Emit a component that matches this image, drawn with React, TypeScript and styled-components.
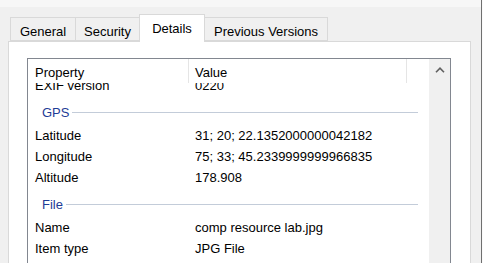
import styled, { createGlobalStyle } from 'styled-components'

const GlobalStyle = createGlobalStyle`
  body {
    margin: 0;
    background: #fafafa;
    font-family: 'Liberation Sans', Arial, sans-serif;
    font-size: 13px;
    color: #000;
  }
`

const tabs = [
  { label: 'General', width: 66 },
  { label: 'Security', width: 65 },
  { label: 'Details', width: 66, active: true },
  { label: 'Previous Versions', width: 124 },
]

type Row =
  | { kind: 'group'; label: string }
  | { kind: 'item'; name: string; value: string }

const rows: Row[] = [
  { kind: 'item', name: 'EXIF version', value: '0220' },
  { kind: 'group', label: 'GPS' },
  { kind: 'item', name: 'Latitude', value: '31; 20; 22.1352000000042182' },
  { kind: 'item', name: 'Longitude', value: '75; 33; 45.2339999999966835' },
  { kind: 'item', name: 'Altitude', value: '178.908' },
  { kind: 'group', label: 'File' },
  { kind: 'item', name: 'Name', value: 'comp resource lab.jpg' },
  { kind: 'item', name: 'Item type', value: 'JPG File' },
]

export default function App() {
  return (
    <>
      <GlobalStyle />
      <Screen>
        <Window>
          <TopStrip />
          <TabStrip>
            {tabs.map((t) => (
              <Tab key={t.label} $width={t.width} $active={!!t.active}>
                {t.label}
              </Tab>
            ))}
          </TabStrip>
          <Panel>
            <ListBox>
              <ListMain>
                <Header>
                  <HeaderCell>Property</HeaderCell>
                  <HeaderCell $value>Value</HeaderCell>
                  <HeaderRest />
                </Header>
                <Body>
                  {/* list is scrolled a few pixels, so the first row sits under the header */}
                  <Rows>
                    {rows.map((r, i) =>
                      r.kind === 'group' ? (
                        <GroupRow key={i}>
                          <GroupLabel>{r.label}</GroupLabel>
                          <GroupLine />
                        </GroupRow>
                      ) : (
                        <ItemRow key={i}>
                          <NameCell>{r.name}</NameCell>
                          <ValueCell>{r.value}</ValueCell>
                        </ItemRow>
                      )
                    )}
                  </Rows>
                </Body>
              </ListMain>
              <ScrollBar>
                <ArrowButton>
                  <svg width="10" height="6" viewBox="0 0 10 6">
                    <path d="M1 5.2 L5 1.2 L9 5.2" fill="none" stroke="#606060" strokeWidth="1.6" />
                  </svg>
                </ArrowButton>
              </ScrollBar>
            </ListBox>
          </Panel>
        </Window>
      </Screen>
    </>
  )
}

const Screen = styled.div`
  width: 483px;
  height: 263px;
  overflow: hidden;
  display: flex;
`

const Window = styled.div`
  width: 481px;
  height: 263px;
  border-right: 1px solid #6f6f6f;
  background: #f0f0f0;
  display: flex;
  flex-direction: column;
`

const TopStrip = styled.div`
  height: 7px;
  background: #f7f7f7;
  flex-shrink: 0;
`

const TabStrip = styled.div`
  height: 34px;
  padding-left: 10px;
  display: flex;
  align-items: flex-end;
  flex-shrink: 0;
`

const Tab = styled.div<{ $width: number; $active: boolean }>`
  box-sizing: border-box;
  width: ${(p) => p.$width}px;
  height: ${(p) => (p.$active ? 28 : 24)}px;
  margin-left: -1px;
  &:first-child {
    margin-left: 0;
  }
  margin-bottom: ${(p) => (p.$active ? -1 : 0)}px;
  padding-top: ${(p) => (p.$active ? 0 : 4)}px;
  border: 1px solid #d9d9d9;
  border-bottom: ${(p) => (p.$active ? 'none' : '1px solid #d9d9d9')};
  background: ${(p) => (p.$active ? '#fff' : '#f0f0f0')};
  position: relative;
  z-index: ${(p) => (p.$active ? 2 : 1)};
  display: flex;
  align-items: center;
  justify-content: center;
  white-space: nowrap;
`

const Panel = styled.div`
  box-sizing: border-box;
  margin-left: 8px;
  width: 463px;
  flex: 1;
  border: 1px solid #d9d9d9;
  background: #fff;
  padding: 16px 0 0 18px;
`

const ListBox = styled.div`
  box-sizing: border-box;
  width: 424px;
  height: 260px;
  border: 1px solid #828790;
  display: flex;
`

const ListMain = styled.div`
  flex: 1;
  display: flex;
  flex-direction: column;
  overflow: hidden;
`

const Header = styled.div`
  height: 24px;
  display: grid;
  grid-template-columns: 161px 218px 1fr;
  flex-shrink: 0;
  background: #fff;
`

const HeaderCell = styled.div<{ $value?: boolean }>`
  box-sizing: border-box;
  padding-left: ${(p) => (p.$value ? 6 : 7)}px;
  border-right: 1px solid #e5e5e5;
  display: flex;
  align-items: center;
  padding-top: 2px;
`

const HeaderRest = styled.div``

const Body = styled.div`
  flex: 1;
  overflow: hidden;
`

const Rows = styled.div`
  margin-top: -8px;
`

const ItemRow = styled.div`
  height: 21px;
  display: grid;
  grid-template-columns: 161px 1fr;
  align-items: center;
`

const NameCell = styled.div`
  padding-left: 7px;
  white-space: nowrap;
`

const ValueCell = styled.div`
  padding-left: 6px;
  white-space: nowrap;
`

const GroupRow = styled.div`
  box-sizing: border-box;
  height: 29px;
  padding: 4px 11px 0 14px;
  display: flex;
  align-items: center;
`

const GroupLabel = styled.span`
  color: #1e3c96;
  font-size: 13px;
`

const GroupLine = styled.div`
  flex: 1;
  height: 1px;
  margin-left: 3px;
  margin-top: -1px;
  background: #c3ccd9;
`

const ScrollBar = styled.div`
  width: 21px;
  background: #f0f0f0;
  display: flex;
  flex-direction: column;
`

const ArrowButton = styled.div`
  height: 21px;
  display: flex;
  align-items: center;
  justify-content: center;
`
